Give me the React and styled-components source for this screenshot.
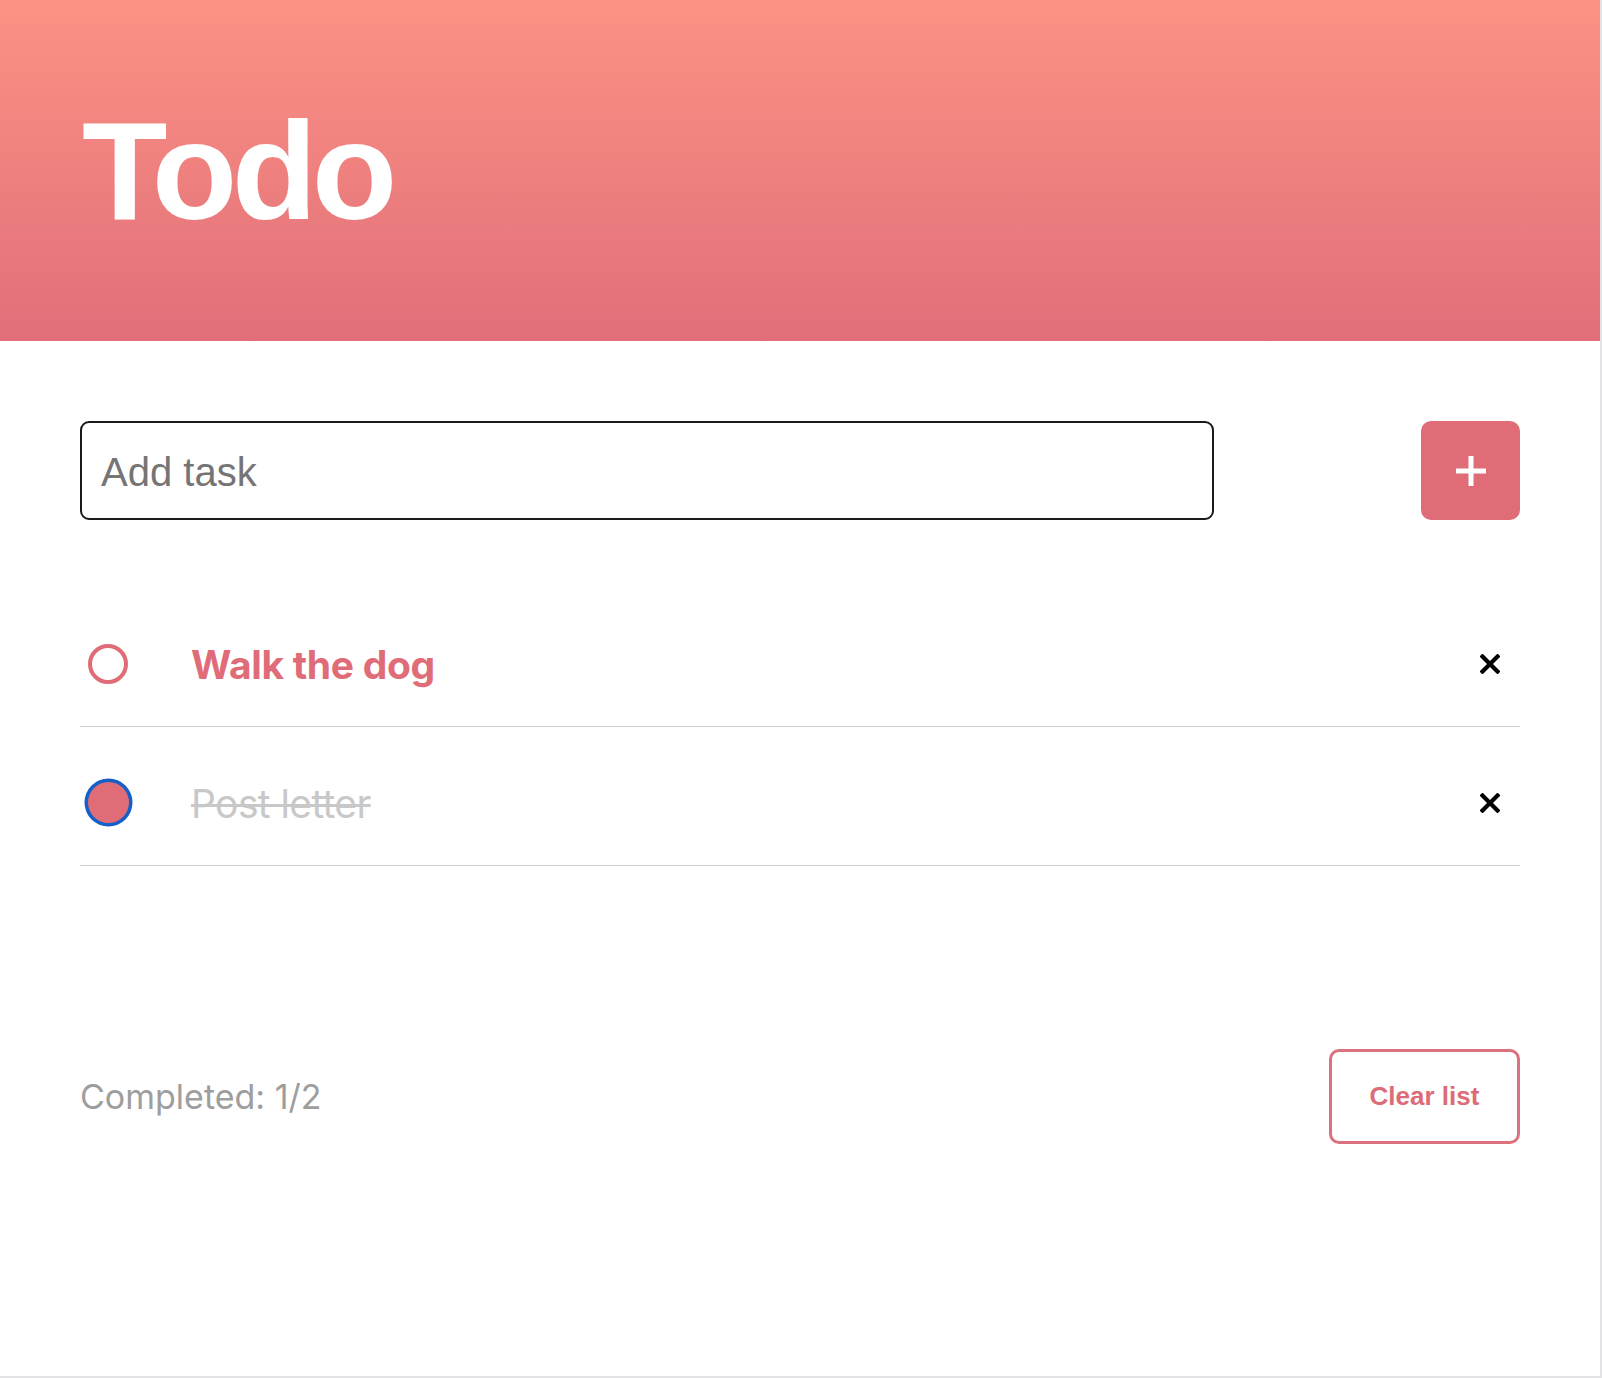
import React, { useState } from "react";
import styled, { createGlobalStyle } from "styled-components";

const GlobalStyle = createGlobalStyle`
  html, body {
    margin: 0;
    padding: 0;
    background: #e3e2e6;
  }
  * { box-sizing: border-box; }
`;

const PINK = "#e06c78";

const Card = styled.div`
  width: 1600px;
  min-height: 1376px;
  background: #ffffff;
  display: flex;
  flex-direction: column;
`;

const Header = styled.header`
  height: 341px;
  display: flex;
  align-items: center;
  padding: 0 80px;
  background: linear-gradient(180deg, #fc9384 0%, #e16e7a 100%);
`;

const Title = styled.h1`
  margin: 0;
  margin-left: 2px;
  font-family: "Liberation Sans", Arial, sans-serif;
  font-weight: 700;
  font-size: 140px;
  line-height: 1;
  letter-spacing: -5.5px;
  color: #ffffff;
`;

const Main = styled.main`
  padding: 80px 80px 0;
  display: flex;
  flex-direction: column;
`;

const Form = styled.form`
  display: flex;
  justify-content: space-between;
  align-items: center;
`;

const TaskInput = styled.input`
  width: 1134px;
  height: 99px;
  border: 2px solid #1a1a1a;
  border-radius: 9px;
  padding: 4px 19px 0;
  font-family: "Liberation Sans", Arial, sans-serif;
  font-size: 40px;
  color: #222;
  outline: none;
  &::placeholder {
    color: #757575;
  }
`;

const AddButton = styled.button`
  width: 99px;
  height: 99px;
  border: none;
  border-radius: 10px;
  background: ${PINK};
  display: flex;
  align-items: center;
  justify-content: center;
  padding: 0;
  cursor: pointer;
`;

const List = styled.ul`
  list-style: none;
  margin: 68px 0 0;
  padding: 0;
`;

const Row = styled.li`
  height: 139px;
  display: flex;
  align-items: center;
  padding: 40px 0 27px;
  border-bottom: 1px solid #d2d2d2;
`;

const CheckWrap = styled.div`
  width: 56px;
  display: flex;
  justify-content: center;
  align-items: center;
`;

const Check = styled.span`
  display: block;
  border-radius: 50%;
  width: ${(p) => (p.$checked ? "41px" : "40px")};
  height: ${(p) => (p.$checked ? "41px" : "40px")};
  border: ${(p) => (p.$checked ? "none" : `4px solid ${PINK}`)};
  background: ${(p) => (p.$checked ? PINK : "transparent")};
  box-shadow: ${(p) => (p.$checked ? "0 0 0 3.5px #1460c8" : "none")};
  cursor: pointer;
`;

const Label = styled.span`
  flex: 1;
  margin-left: 55px;
  padding-top: 4px;
  font-family: Inter, "Noto Sans", sans-serif;
  font-size: 39px;
  line-height: 1.2;
  font-weight: ${(p) => (p.$done ? 400 : 700)};
  letter-spacing: ${(p) => (p.$done ? "-0.6px" : "-0.3px")};
  color: ${(p) => (p.$done ? "#c8c8c8" : PINK)};
  text-decoration: ${(p) => (p.$done ? "line-through" : "none")};
  text-decoration-thickness: 3px;
  text-decoration-color: #c8c8c8;
`;

const DeleteButton = styled.button`
  width: 60px;
  height: 60px;
  border: none;
  background: transparent;
  padding: 0;
  display: flex;
  align-items: center;
  justify-content: center;
  cursor: pointer;
`;

const Footer = styled.footer`
  margin-top: 183px;
  display: flex;
  justify-content: space-between;
  align-items: center;
`;

const Count = styled.span`
  font-family: Inter, "Noto Sans", sans-serif;
  font-size: 34px;
  color: #9e9e9e;
`;

const ClearButton = styled.button`
  width: 191px;
  height: 95px;
  border: 3px solid #dc717d;
  border-radius: 10px;
  background: #ffffff;
  font-family: "Liberation Sans", Arial, sans-serif;
  font-weight: 700;
  font-size: 26px;
  color: #dc6c78;
  cursor: pointer;
`;

const PlusIcon = () => (
  <svg width="30" height="30" viewBox="0 0 30 30">
    <path d="M15 0 V30 M0 15 H30" stroke="#fff" strokeWidth="5" fill="none" />
  </svg>
);

const CloseIcon = () => (
  <svg width="20" height="20" viewBox="0 0 20 20">
    <path d="M2.5 2.5 L17.5 17.5 M17.5 2.5 L2.5 17.5" stroke="#000" strokeWidth="4.2" strokeLinecap="square" fill="none" />
  </svg>
);

export default function App() {
  const [tasks, setTasks] = useState([
    { id: 1, text: "Walk the dog", done: false },
    { id: 2, text: "Post letter", done: true },
  ]);
  const done = tasks.filter((t) => t.done).length;

  return (
    <>
      <GlobalStyle />
      <Card>
        <Header>
          <Title>Todo</Title>
        </Header>
        <Main>
          <Form onSubmit={(e) => e.preventDefault()}>
            <TaskInput placeholder="Add task" />
            <AddButton type="submit" aria-label="Add task">
              <PlusIcon />
            </AddButton>
          </Form>
          <List>
            {tasks.map((t) => (
              <Row key={t.id}>
                <CheckWrap>
                  <Check
                    $checked={t.done}
                    onClick={() =>
                      setTasks(tasks.map((x) => (x.id === t.id ? { ...x, done: !x.done } : x)))
                    }
                  />
                </CheckWrap>
                <Label $done={t.done}>{t.text}</Label>
                <DeleteButton aria-label="Delete">
                  <CloseIcon />
                </DeleteButton>
              </Row>
            ))}
          </List>
          <Footer>
            <Count>
              Completed: {done}/{tasks.length}
            </Count>
            <ClearButton>Clear list</ClearButton>
          </Footer>
        </Main>
      </Card>
    </>
  );
}
